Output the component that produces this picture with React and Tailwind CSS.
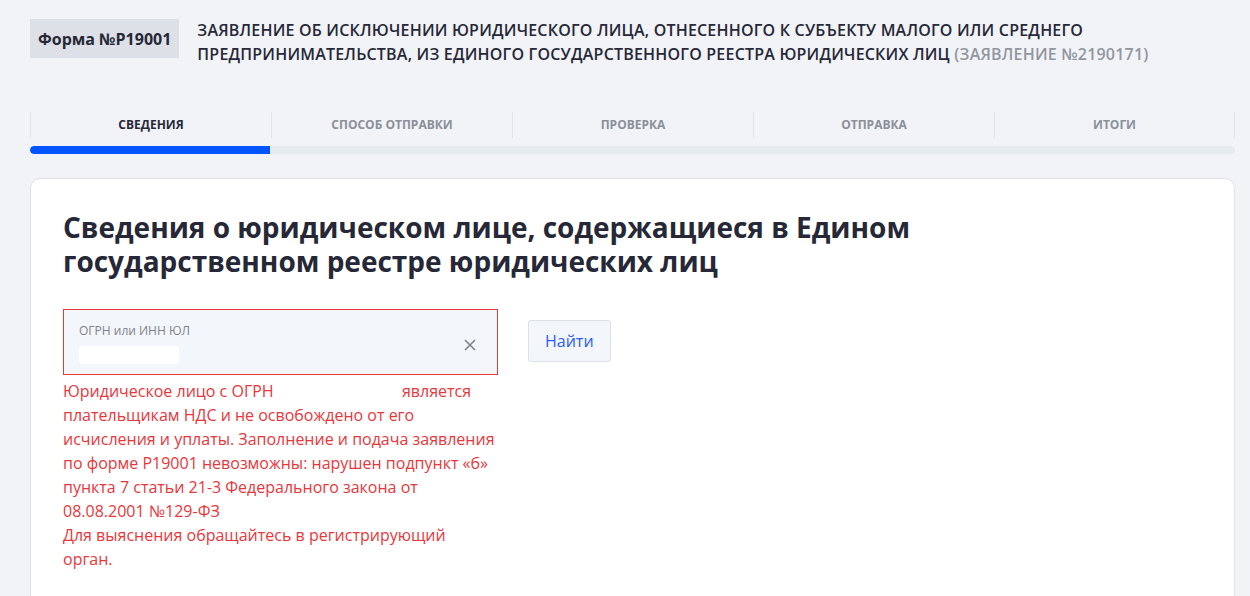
import React from "react";

const steps = ["Сведения", "Способ отправки", "Проверка", "Отправка", "Итоги"];

const App = () => {
  return (
    <div className="min-h-[596px] bg-[#f2f3f7] font-['Open_Sans',sans-serif] text-[#262837] overflow-hidden">
      <div className="pl-[30px] pr-[15px] pt-[19px]">
        <div className="flex items-start gap-[18px]">
          <div className="shrink-0 bg-[#dde0e6] px-[8px] h-[39px] flex items-center text-[16px] font-bold">
            Форма №Р19001
          </div>
          <div className="text-[16px] leading-[24px] font-semibold uppercase tracking-[0.2px] pr-[80px] -mt-[1px]">
            Заявление об исключении юридического лица, отнесенного к субъекту малого или среднего
            предпринимательства, из единого государственного реестра юридических лиц{" "}
            <span className="text-[#9096a0]">(Заявление №2190171)</span>
          </div>
        </div>

        <div className="mt-[46px] grid grid-cols-5">
          {steps.map((s, i) => (
            <div
              key={s}
              className={
                "h-[26px] flex items-center justify-center border-l border-[#dfe2e7] text-[12px] font-bold uppercase " +
                (i === 0 ? "text-[#262837]" : "text-[#8a9099]") +
                (i === 4 ? " border-r" : "")
              }
            >
              {s}
            </div>
          ))}
        </div>
        <div className="mt-[8px] h-[8px] rounded-full bg-[#e7eaee] overflow-hidden">
          <div className="h-full w-[240px] bg-[#0055ff] rounded-l-full"></div>
        </div>

        <div className="mt-[24px] bg-white border border-[#dfe2e7] rounded-[10px] px-[32px] pt-[31px] pb-[40px]">
          <h1 className="text-[28px] leading-[34px] font-bold max-w-[870px]">
            Сведения о юридическом лице, содержащиеся в Едином государственном реестре юридических лиц
          </h1>

          <div className="mt-[31px] flex items-start gap-[30px]">
            <div className="w-[435px]">
              <div className="h-[66px] border border-[#e53935] bg-[#f3f6fa] flex items-center pl-[15px] pr-[20px]">
                <div className="flex-1">
                  <div className="text-[12px] leading-[16px] text-[#7d828b] pt-[2px]">ОГРН или ИНН ЮЛ</div>
                  <div className="mt-[7px] h-[18px] w-[100px] bg-white rounded-[3px]"></div>
                </div>
                <svg width="14" height="14" viewBox="0 0 14 14" className="mt-[6px]">
                  <path d="M2 2 L12 12 M12 2 L2 12" stroke="#7d828b" strokeWidth="1.6" />
                </svg>
              </div>
              <div className="mt-[4px] text-[16px] leading-[24px] text-[#e8373c]">
                Юридическое лицо с ОГРН <span className="inline-block w-[120px]"></span> является
                плательщикам НДС и не освобождено от его исчисления и уплаты. Заполнение и подача
                заявления по форме Р19001 невозможны: нарушен подпункт «б» пункта 7 статьи 21-3
                Федерального закона от 08.08.2001 №129-ФЗ
                <br />
                Для выяснения обращайтесь в регистрирующий орган.
              </div>
            </div>
            <button className="mt-[11px] h-[42px] px-[16px] bg-[#f3f6fa] border border-[#dde0e6] rounded-[3px] text-[16px] text-[#2d5bff]">
              Найти
            </button>
          </div>
        </div>
      </div>
    </div>
  );
};

export default App;
